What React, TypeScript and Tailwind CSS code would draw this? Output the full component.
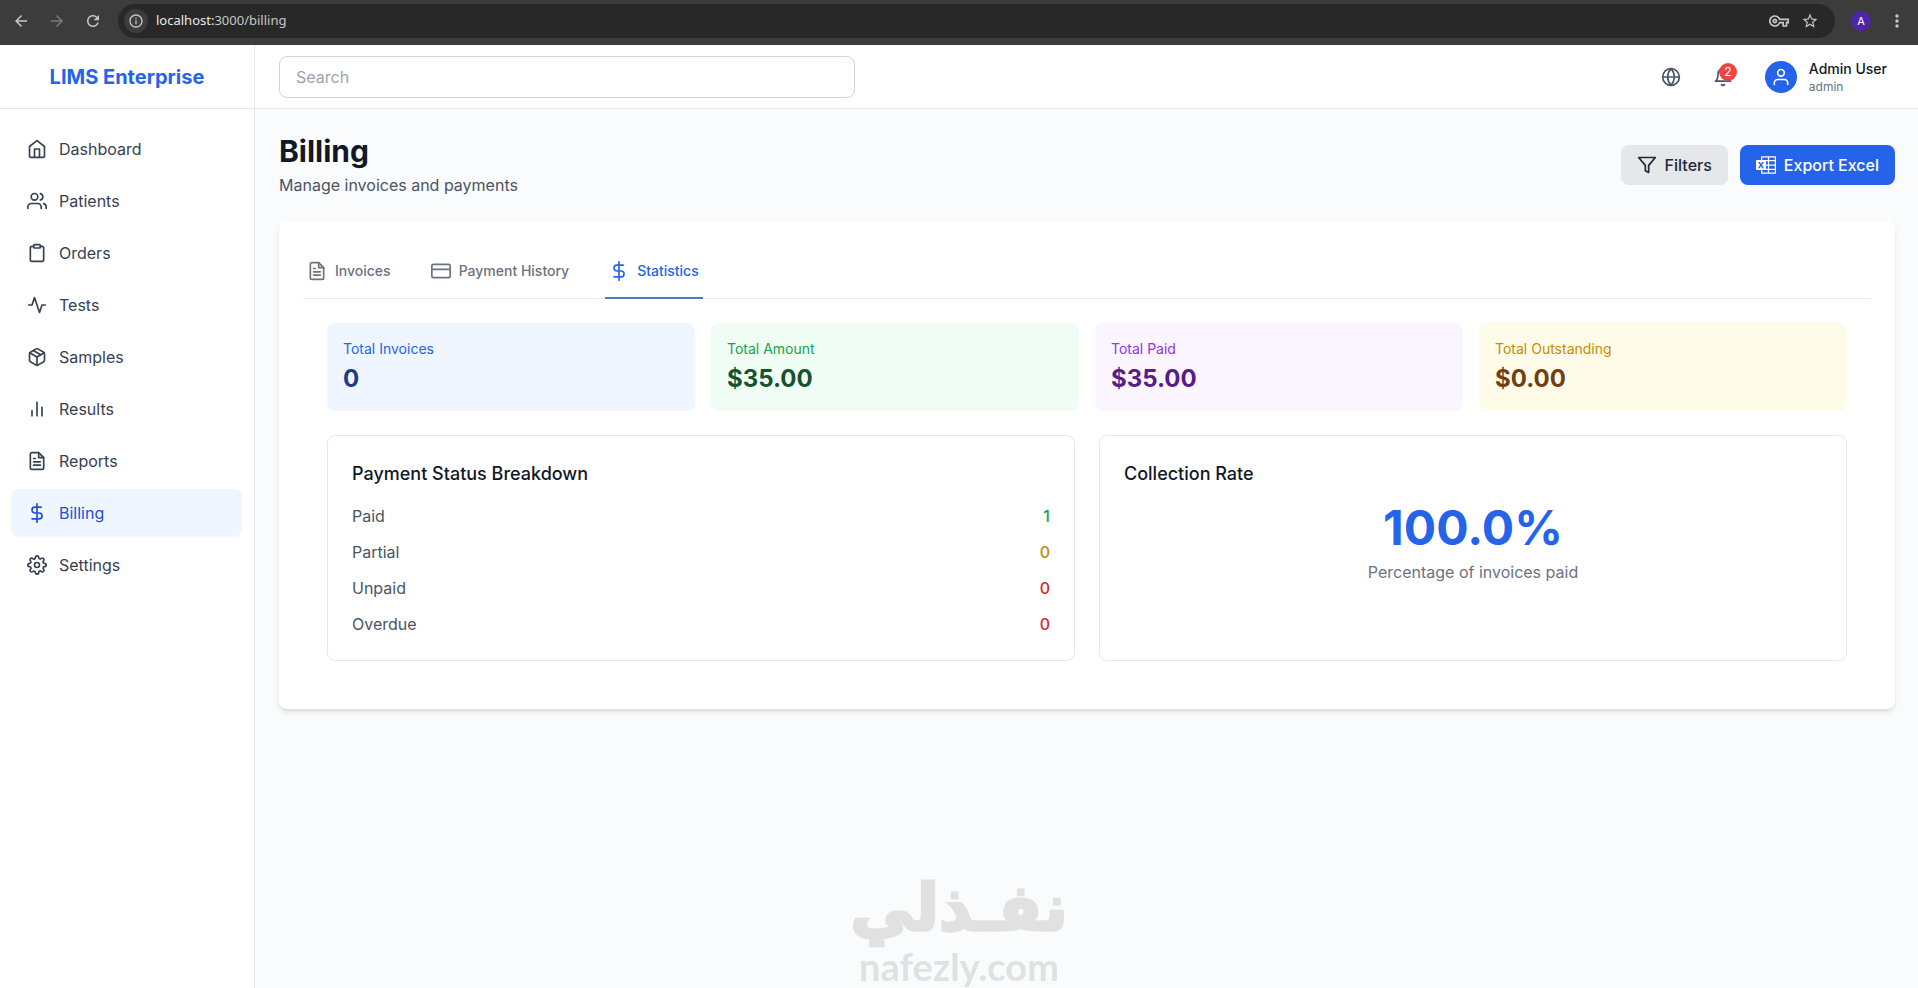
import { useState } from 'react';
import type { IconType } from 'react-icons';
import {
  FiActivity,
  FiBarChart2,
  FiBell,
  FiClipboard,
  FiCreditCard,
  FiDollarSign,
  FiFileText,
  FiFilter,
  FiGlobe,
  FiHome,
  FiPackage,
  FiSettings,
  FiUser,
  FiUsers,
} from 'react-icons/fi';
import {
  MdArrowBack,
  MdArrowForward,
  MdInfoOutline,
  MdMoreVert,
  MdOutlineVpnKey,
  MdRefresh,
  MdStarBorder,
} from 'react-icons/md';

const navItems: { label: string; icon: IconType }[] = [
  { label: 'Dashboard', icon: FiHome },
  { label: 'Patients', icon: FiUsers },
  { label: 'Orders', icon: FiClipboard },
  { label: 'Tests', icon: FiActivity },
  { label: 'Samples', icon: FiPackage },
  { label: 'Results', icon: FiBarChart2 },
  { label: 'Reports', icon: FiFileText },
  { label: 'Billing', icon: FiDollarSign },
  { label: 'Settings', icon: FiSettings },
];

const tabs: { label: string; icon: IconType }[] = [
  { label: 'Invoices', icon: FiFileText },
  { label: 'Payment History', icon: FiCreditCard },
  { label: 'Statistics', icon: FiDollarSign },
];

const totals = [
  { label: 'Total Invoices', value: '0', box: 'bg-[#eff6ff]', text: 'text-[#2563eb]', number: 'text-[#1e3a8a]' },
  { label: 'Total Amount', value: '$35.00', box: 'bg-[#f0fdf4]', text: 'text-[#16a34a]', number: 'text-[#14532d]' },
  { label: 'Total Paid', value: '$35.00', box: 'bg-[#faf5ff]', text: 'text-[#9333ea]', number: 'text-[#581c87]' },
  { label: 'Total Outstanding', value: '$0.00', box: 'bg-[#fefce8]', text: 'text-[#ca8a04]', number: 'text-[#713f12]' },
];

const breakdown = [
  { label: 'Paid', count: 1, color: 'text-[#16a34a]' },
  { label: 'Partial', count: 0, color: 'text-[#ca8a04]' },
  { label: 'Unpaid', count: 0, color: 'text-[#dc2626]' },
  { label: 'Overdue', count: 0, color: 'text-[#dc2626]' },
];

const ExcelIcon = () => (
  <svg viewBox="0 0 24 24" fill="currentColor" className="size-5" aria-hidden="true">
    <path d="M23 1.5q.41 0 .7.3.3.29.3.7v19q0 .41-.3.7-.29.3-.7.3H7q-.41 0-.7-.3-.3-.29-.3-.7V18H1q-.41 0-.7-.3-.3-.29-.3-.7V7q0-.41.3-.7Q.58 6 1 6h5V2.5q0-.41.3-.7.29-.3.7-.3zM6 13.28l1.42 2.66h2.14l-2.38-3.87 2.34-3.8H7.46l-1.3 2.4-.05.08-.04.09-.64-1.28-.66-1.29H2.59l2.27 3.82-2.48 3.85h2.16zM14.25 21v-3H7.5v3zm0-4.5v-3.75H12v3.75zm0-5.25V7.5H12v3.75zm0-5.25V3H7.5v3zm8.25 15v-3h-6.75v3zm0-4.5v-3.75h-6.75v3.75zm0-5.25V7.5h-6.75v3.75zm0-5.25V3h-6.75v3Z" />
  </svg>
);

const BrowserBar = () => (
  <div className="flex h-[45px] shrink-0 items-center bg-[#3c3c3c] pr-[11px] pb-[3px] text-[#c7c7c7]">
    <div className="flex items-center gap-[18px] pl-3">
      <button aria-label="Back"><MdArrowBack className="size-[18px]" /></button>
      <button aria-label="Forward" className="text-[#7a7a7a]"><MdArrowForward className="size-[18px]" /></button>
      <button aria-label="Reload"><MdRefresh className="size-[18px]" /></button>
    </div>
    <div className="ml-4 flex h-[34px] flex-1 items-center rounded-full bg-[#282828] pr-4 pl-[6px]">
      <span className="flex size-6 items-center justify-center rounded-full bg-[#3c3c3c]">
        <MdInfoOutline className="size-4" />
      </span>
      <span className="ml-2 flex-1 font-['Noto_Sans',sans-serif] text-[13px] text-[#c7c7c7]">
        <span className="text-[#e8e8e8]">localhost:</span>3000/billing
      </span>
      <button aria-label="Passwords"><MdOutlineVpnKey className="size-5" /></button>
      <button aria-label="Bookmark" className="ml-3"><MdStarBorder className="size-[18px]" /></button>
    </div>
    <button className="ml-4 size-5 rounded-full bg-[#4c25a8] text-[11px] text-white">A</button>
    <button aria-label="Menu" className="ml-4"><MdMoreVert className="size-5" /></button>
  </div>
);

const Sidebar = () => (
  <aside className="w-[255px] shrink-0 border-r border-gray-200 bg-white">
    <div className="flex h-16 items-center justify-center border-b border-gray-200">
      <h1 className="text-xl font-bold text-[#2563eb]">LIMS Enterprise</h1>
    </div>
    <nav className="space-y-1 pt-4 pr-3 pl-[11px]">
      {navItems.map(({ label, icon: Icon }) => (
        <a
          key={label}
          href="#"
          className={`flex items-center gap-3 rounded-lg px-4 py-3 ${label === 'Billing' ? 'bg-[#eff6ff] text-[#1d4ed8]' : 'text-[#374151]'}`}
        >
          <Icon className="size-5" />
          <span>{label}</span>
        </a>
      ))}
    </nav>
  </aside>
);

const Header = () => (
  <header className="flex h-16 items-center justify-between border-b border-gray-200 bg-white pr-[23px] pl-6">
    <input
      type="text"
      aria-label="Search"
      placeholder="Search"
      className="w-full max-w-xl rounded-lg border border-[#d1d5db] px-4 py-2 placeholder:text-[#9ca3af]"
    />
    <div className="flex items-center gap-4">
      <button aria-label="Language" className="p-2 text-[#4b5563]"><FiGlobe className="size-5" /></button>
      <button aria-label="Notifications" className="relative p-2 text-[#4b5563]">
        <FiBell className="size-5" />
        <span className="absolute top-1 right-1 flex size-[18px] items-center justify-center rounded-full bg-[#ef4444] text-xs text-white">2</span>
      </button>
      <button className="flex items-center gap-3 px-2 text-left">
        <span className="flex size-8 items-center justify-center rounded-full bg-[#2563eb] text-white">
          <FiUser className="size-5" />
        </span>
        <span>
          <span className="block text-sm font-medium text-[#111827]">Admin User</span>
          <span className="block text-xs text-[#6b7280]">admin</span>
        </span>
      </button>
    </div>
  </header>
);

const Statistics = () => (
  <div className="p-6">
    <div className="grid grid-cols-4 gap-4">
      {totals.map((t) => (
        <div key={t.label} className={`rounded-lg p-4 ${t.box}`}>
          <p className={`text-sm ${t.text}`}>{t.label}</p>
          <p className={`mt-1 text-2xl font-bold ${t.number}`}>{t.value}</p>
        </div>
      ))}
    </div>
    <div className="mt-6 grid grid-cols-2 gap-6">
      <section className="rounded-lg border border-gray-200 p-6">
        <h3 className="mb-4 text-lg font-medium text-[#111827]">Payment Status Breakdown</h3>
        <dl className="space-y-3">
          {breakdown.map((row) => (
            <div key={row.label} className="flex justify-between">
              <dt className="text-[#4b5563]">{row.label}</dt>
              <dd className={`font-medium ${row.color}`}>{row.count}</dd>
            </div>
          ))}
        </dl>
      </section>
      <section className="rounded-lg border border-gray-200 p-6">
        <h3 className="mb-4 text-lg font-medium text-[#111827]">Collection Rate</h3>
        <div className="text-center">
          <p className="text-5xl font-bold text-[#2563eb]">100.0%</p>
          <p className="mt-2 text-[#6b7280]">Percentage of invoices paid</p>
        </div>
      </section>
    </div>
  </div>
);

const Watermark = () => (
  <div className="pointer-events-none fixed bottom-0 left-1/2 flex -translate-x-1/2 flex-col items-center pb-0.5 font-bold text-[#e1e1e1]">
    <span dir="rtl" lang="ar" className="font-['DejaVu_Sans',sans-serif] text-[64px] leading-[76px] [-webkit-text-stroke:3px_#e1e1e1]">نفـذلي</span>
    <span className="font-['Lato',sans-serif] text-[38px] leading-10">nafezly.com</span>
  </div>
);

const App = () => {
  const [activeTab, setActiveTab] = useState('Statistics');

  return (
    <div className="flex min-h-screen flex-col bg-[#f9fbfd] font-['Inter',sans-serif] text-base text-[#111827]">
      <BrowserBar />
      <div className="flex flex-1">
        <Sidebar />
        <div className="min-w-0 flex-1">
          <Header />
          <main className="py-6 pr-[23px] pl-6">
            <div className="flex items-center justify-between">
              <div>
                <h2 className="text-3xl font-bold">Billing</h2>
                <p className="mt-1 text-[#4b5563]">Manage invoices and payments</p>
              </div>
              <div className="flex gap-3">
                <button className="flex items-center gap-2 rounded-lg bg-[#e5e7eb] px-4 py-2 font-medium text-[#1f2937]">
                  <FiFilter className="size-5" />
                  Filters
                </button>
                <button className="flex items-center gap-2 rounded-lg bg-[#2563eb] px-4 py-2 font-medium text-white">
                  <ExcelIcon />
                  Export Excel
                </button>
              </div>
            </div>

            <div className="mt-6 rounded-lg bg-white p-6 shadow-md">
              <div role="tablist" className="flex gap-8 border-b border-gray-200">
                {tabs.map(({ label, icon: Icon }) => (
                  <button
                    key={label}
                    role="tab"
                    aria-selected={activeTab === label}
                    onClick={() => setActiveTab(label)}
                    className={`-mb-px flex items-center gap-2 border-b-2 px-1 py-4 text-sm font-medium ${activeTab === label ? 'border-[#4580c4] text-[#2563eb]' : 'border-transparent text-[#6b7280]'}`}
                  >
                    <Icon className="size-5" />
                    {label}
                  </button>
                ))}
              </div>
              <Statistics />
            </div>
          </main>
        </div>
      </div>
      <Watermark />
    </div>
  );
};

export default App;
